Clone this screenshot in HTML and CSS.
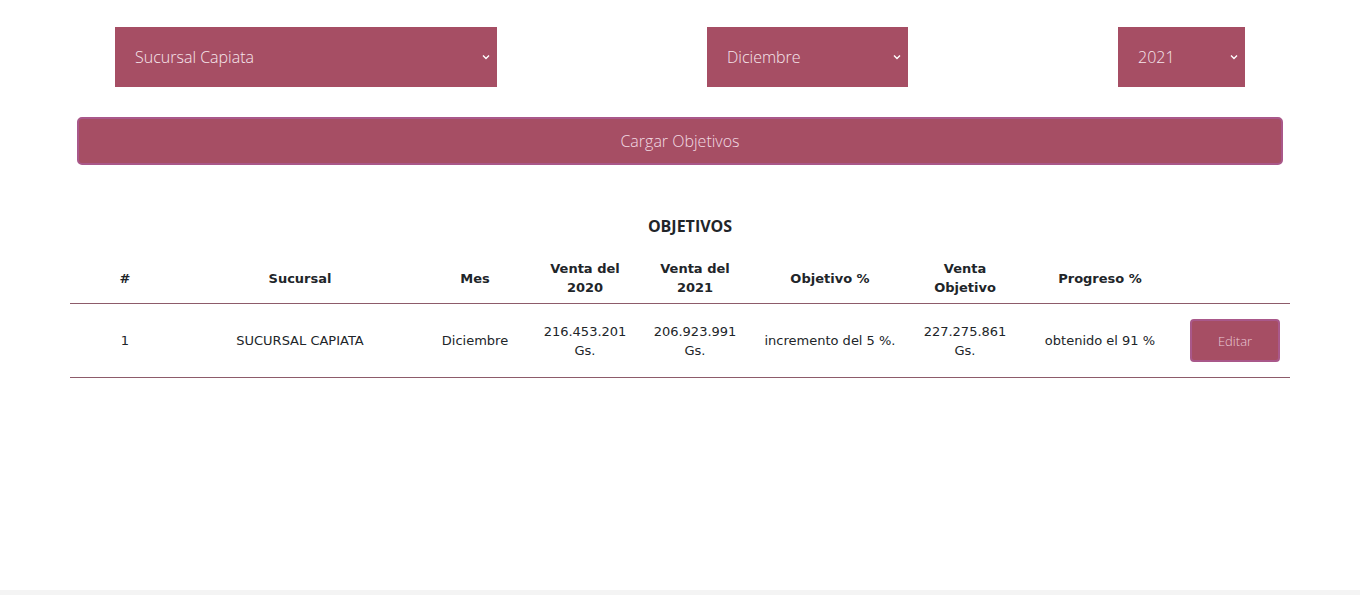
FILE: index.html
```html
<!DOCTYPE html>
<html lang="es">
<head>
<meta charset="utf-8">
<title>Objetivos</title>
<link rel="stylesheet" href="styles.css">
</head>
<body>
<div class="page">
  <div class="filters">
    <div class="select sel-suc"><span>Sucursal Capiata</span><svg class="chev" viewBox="0 0 8 6" width="8" height="6"><path d="M1 1.5 L4 4.5 L7 1.5" fill="none" stroke="#fff" stroke-width="1.4"/></svg></div>
    <div class="select sel-mes"><span>Diciembre</span><svg class="chev" viewBox="0 0 8 6" width="8" height="6"><path d="M1 1.5 L4 4.5 L7 1.5" fill="none" stroke="#fff" stroke-width="1.4"/></svg></div>
    <div class="select sel-anio"><span>2021</span><svg class="chev" viewBox="0 0 8 6" width="8" height="6"><path d="M1 1.5 L4 4.5 L7 1.5" fill="none" stroke="#fff" stroke-width="1.4"/></svg></div>
  </div>
  <div class="load-wrap">
    <button class="load-btn">Cargar Objetivos</button>
  </div>
  <h2 class="title">OBJETIVOS</h2>
  <div class="table-wrap">
    <table class="obj-table">
      <colgroup>
        <col class="c-s"><col class="c-l"><col class="c-s"><col class="c-s"><col class="c-s"><col class="c-m"><col class="c-s"><col class="c-m"><col class="c-s">
      </colgroup>
      <thead>
        <tr>
          <th>#</th>
          <th>Sucursal</th>
          <th>Mes</th>
          <th>Venta del<br>2020</th>
          <th>Venta del<br>2021</th>
          <th>Objetivo %</th>
          <th>Venta<br>Objetivo</th>
          <th>Progreso %</th>
          <th></th>
        </tr>
      </thead>
      <tbody>
        <tr>
          <td>1</td>
          <td>SUCURSAL CAPIATA</td>
          <td>Diciembre</td>
          <td>216.453.201<br>Gs.</td>
          <td>206.923.991<br>Gs.</td>
          <td>incremento del 5 %.</td>
          <td>227.275.861<br>Gs.</td>
          <td>obtenido el 91 %</td>
          <td><button class="edit-btn">Editar</button></td>
        </tr>
      </tbody>
    </table>
  </div>
</div>
<div class="footer"></div>
</body>
</html>
```
FILE: styles.css
```css
html, body {
  margin: 0;
  padding: 0;
  background: #fff;
}
body {
  font-family: "Open Sans", "DejaVu Sans", sans-serif;
  color: #212529;
}
.page {
  height: 590px;
  padding-top: 27px;
  box-sizing: border-box;
}
.filters {
  display: flex;
  justify-content: center;
  gap: 210px;
}
.select {
  height: 60px;
  background: #a64e64;
  color: #f6e6ec;
  font-weight: 300;
  font-size: 16px;
  display: flex;
  align-items: center;
  justify-content: space-between;
  padding: 0 7px 0 20px;
  box-sizing: border-box;
}
.sel-suc { width: 382px; }
.sel-mes { width: 201px; }
.sel-anio { width: 127px; }
.chev { display: block; }
.load-wrap {
  padding: 30px 77px 0;
}
.load-btn {
  display: block;
  width: 100%;
  height: 48px;
  background: #a64e64;
  border: 2px solid #a9588a;
  border-radius: 5px;
  color: #f2dbe3;
  font-family: "Open Sans", sans-serif;
  font-weight: 300;
  font-size: 16px;
  cursor: pointer;
}
.title {
  margin: 50px 0 0;
  padding-left: 20px;
  text-align: center;
  font-family: "Open Sans", sans-serif;
  font-weight: 700;
  font-size: 16px;
  line-height: 22px;
  color: #212529;
}
.table-wrap {
  padding: 18px 70px 0;
}
.obj-table {
  width: 1220px;
  border-collapse: collapse;
  table-layout: fixed;
  font-family: "DejaVu Sans", sans-serif;
  font-size: 13px;
  color: #212529;
}
.c-s { width: 110px; }
.c-l { width: 240px; }
.c-m { width: 160px; }
.obj-table th, .obj-table td {
  text-align: center;
  vertical-align: middle;
  line-height: 19px;
}
.obj-table th {
  font-weight: 700;
  padding: 4px 0 6px;
  border-bottom: 1px solid #8d5b6a;
}
.obj-table td {
  padding: 15px 0;
  border-bottom: 1px solid #8d5b6a;
}
.edit-btn {
  display: block;
  margin: 0 auto;
  width: 90px;
  height: 43px;
  background: #a64e64;
  border: 2px solid #a9588a;
  border-radius: 4px;
  color: #e9c8d4;
  font-family: "Open Sans", sans-serif;
  font-weight: 300;
  font-size: 13px;
}
.footer {
  height: 5px;
  background: #f4f4f4;
}
```
